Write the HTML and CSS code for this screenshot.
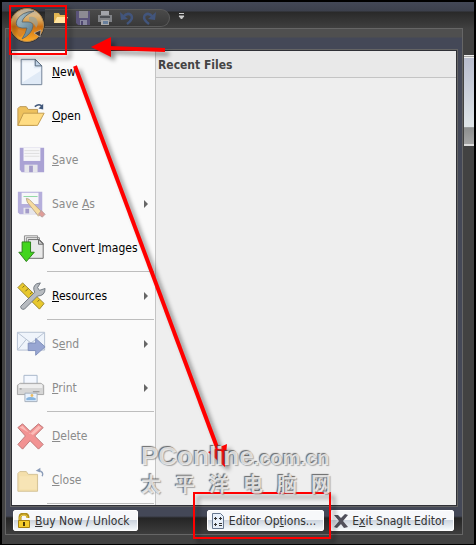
FILE: index.html
```
<!DOCTYPE html>
<html lang="en">
<head>
  <meta charset="UTF-8">
  <title>SnagIt Editor</title>
  <link rel="stylesheet" href="styles.css">
</head>
<body>

<div class="window">

  <!-- title bar -->
  <header class="titlebar">
    <button class="orb" aria-label="SnagIt menu">
      <svg width="36" height="36" viewBox="0 0 36 36">
        <defs>
          <linearGradient id="orb" x1="0" y1="0" x2="0" y2="1">
            <stop offset="0" stop-color="#d9d2c4"/>
            <stop offset=".35" stop-color="#dba75a"/>
            <stop offset=".55" stop-color="#c96f14"/>
            <stop offset="1" stop-color="#ffac28"/>
          </linearGradient>
          <linearGradient id="swirl" x1="0" y1="0" x2="1" y2="1">
            <stop offset="0" stop-color="#b9c9cb"/>
            <stop offset=".5" stop-color="#7f9eac"/>
            <stop offset="1" stop-color="#577685"/>
          </linearGradient>
        </defs>
        <circle cx="18" cy="18" r="17.500" fill="#2b2927"/>
        <circle cx="18" cy="18" r="16.500" fill="url(#orb)" stroke="#b98a4a"/>
        <path d="M25 4Q12 5 8 13q-3 7 5 8l5 0q-1 5-5 11 10-5 11-13 0-4-5-4l-6 0q1-6 12-11z" fill="url(#swirl)" stroke="#59656a" stroke-width=".8"/>
        <path d="M20 10q6-1 8 3 2 4-1 8-1-5-7-7z" fill="#96a19b" opacity=".7"/>
        <path d="M9 22q5 2 6 2-2 5-4 6-4-3-2-8z" fill="#d8852a"/>
        <path d="M25 26l7-3-1 7z" fill="#3b3634" stroke="#ddd" stroke-width=".5"/>
      </svg>
    </button>
    <div class="quick">
      <button aria-label="Open"><svg width="16" height="14" viewBox="0 0 16 14"><path d="M1 2h5l1 2h5v8H1z" fill="#e6b955"/><path d="M4 6h11l-3 6H1z" fill="#ffe4a0"/><path d="M11 3q2-3 4 0" stroke="#444d60" fill="none"/></svg></button>
      <button aria-label="Save"><svg width="16" height="14" viewBox="0 0 16 14"><path d="M1 0h14v14H3l-2-2z" fill="#5a5379"/><path d="M4 0h9v7H4z" fill="#8d8b93"/><path d="M5 9h7v5H5z" fill="#8988a0"/><path d="M6 10h2v4H6z" fill="#4f4870"/></svg></button>
      <button aria-label="Print"><svg width="16" height="14" viewBox="0 0 16 14"><path d="M4 0h8v5H4z" fill="#a2a4aa"/><path d="M1 4h14v7H1z" fill="#808286"/><path d="M3 5h10v2H3z" fill="#4b4e54"/><path d="M4 9h8v5H4z" fill="#aaa"/><path d="M6 10h5v3H6z" fill="#69809c"/></svg></button>
      <button aria-label="Undo"><svg width="16" height="14" viewBox="0 0 16 14"><path d="M4 6q4-5 8-2 3 4-4 9" fill="none" stroke="#42557c" stroke-width="2.500"/><path d="M1 1l1 8 7-1z" fill="#42557c"/></svg></button>
      <button aria-label="Redo"><svg width="16" height="14" viewBox="0 0 16 14"><path d="M12 6Q8 1 4 4q-3 4 4 9" fill="none" stroke="#42557c" stroke-width="2.500"/><path d="M15 1l-1 8-7-1z" fill="#42557c"/></svg></button>
    </div>
    <button class="more" aria-label="Customize"><svg width="7" height="7" viewBox="0 0 7 7"><path d="M1 .5h5M1 3h5L3.500 6z" fill="#ccc" stroke="#ccc"/></svg></button>
  </header>

  <div class="ribbon"></div>

  <!-- application menu -->
  <main class="menu">
    <div class="panes">
      <ul class="commands">
        <li><button><svg class="icon" viewBox="0 0 32 32"><path d="M5.500 2.500h15l7 7v20h-22z" fill="#e0eaf6" stroke="#6f7f93"/><path d="M7 4h12v8h7v3L7 27z" fill="#f4f8fd"/><path d="M20.500 2.500v7h7z" fill="#c3d5e8" stroke="#536477"/></svg><span><u>N</u>ew</span></button></li>
        <li><button><svg class="icon" viewBox="0 0 32 32"><path d="M2 8l2-2h7l2 3h10v5l-4 12H2z" fill="#eec15d" stroke="#b99552"/><path d="M8 13h22l-7 13H2z" fill="#ffdc83" stroke="#c09a4c"/><path d="M20 6q5-4 8 0" fill="none" stroke="#40577a" stroke-width="1.500"/><path d="M29 3v6l-5-1z" fill="#40577a"/></svg><span><u>O</u>pen</span></button></li>
        <li><button disabled><svg class="icon" viewBox="0 0 32 32"><path d="M4 3h26v26H6l-2-3z" fill="#aaa2d4"/><path d="M8 3h18v14H8z" fill="#f6f6f8"/><path d="M9 6h16M9 9h16M9 12h16" stroke="#ddd"/><path d="M9 21h14v8H9z" fill="#e6e6eb"/><path d="M14 22h4v7h-4z" fill="#a39bc9"/></svg><span><u>S</u>ave</span></button></li>
        <li><button disabled><svg class="icon" viewBox="0 0 32 32"><path d="M2 3h26v24H4l-2-2z" fill="#b5aedb"/><path d="M6 4h18v12H6z" fill="#f7f7f9"/><path d="M8 8h15" stroke="#8dd6a2"/><path d="M8 20h13v7H8z" fill="#e6e6eb"/><path d="M10 21h4v5h-4z" fill="#a39bc9"/><path d="M11 10l3 1 14 14-4 4-12-15z" fill="#f7dc9f" stroke="#baa68a"/><path d="M24 27l3-4 4 4-3 3z" fill="#df9d98" stroke="#b7a0a0"/></svg><span>Save <u>A</u>s</span><i></i></button></li>
        <li><button><svg class="icon" viewBox="0 0 32 32"><path d="M9 3h14v18H9zM11 5h14v18H11z" fill="#f2f2f2" stroke="#888"/><path d="M13 7h12l4 4v16H13z" fill="#e9e9e9" stroke="#666"/><path d="M24 7v5h5z" fill="#ccc" stroke="#666"/><path d="M6.500 9.500h9v11h4l-8.500 10-8-10h3.500z" fill="#42d51d" stroke="#2b7e19"/></svg><span>Convert <u>I</u>mages</span></button></li>
        <li class="line"></li>
        <li><button><svg class="icon" viewBox="0 0 32 32"><path d="M2 7l5-5 23 22-5 6z" fill="#e8c82d" stroke="#97852f"/><path d="M9 5l-2 2M13 8l-3 3M17 12l-2 2M21 16l-3 3M25 20l-2 2" stroke="#75651d"/><path d="M5 27l15-15q-3-6 2-9l4-1-3 5 2 3 6-2q0 8-8 8L9 30q-4 1-4-3z" fill="#b7bbc0" stroke="#6e757e"/></svg><span><u>R</u>esources</span><i></i></button></li>
        <li class="line"></li>
        <li><button disabled><svg class="icon" viewBox="0 0 32 32"><path d="M1.500 3.500h29v19h-29z" fill="#eff4fb" stroke="#b3bfd0"/><path d="M2 4l14 11L30 4M2 22l9-11M30 22l-9-11" fill="none" stroke="#b3bfd0"/><path d="M13 15h8v-5l10 9-10 9v-5h-8z" fill="#98a6d2" stroke="#7f8fba"/></svg><span>S<u>e</u>nd</span><i></i></button></li>
        <li><button disabled><svg class="icon" viewBox="0 0 32 32"><path d="M8.500 2.500h14v10h-14z" fill="#f4f8ff" stroke="#a5b4c9"/><path d="M1.500 13l3-2h22l3 2v10h-28z" fill="#d6d6d6" stroke="#a4a4a4"/><path d="M3 12h25v4H3z" fill="#eee"/><path d="M4 17h2M18 20h7" stroke="#888"/><path d="M9.500 21.500h13v9h-13z" fill="#e9f2fd" stroke="#a2adba"/><path d="M11 27q4-3 10 0v2H11z" fill="#87b4de"/><circle cx="17" cy="24" r="1.500" fill="#edbd62"/></svg><span><u>P</u>rint</span><i></i></button></li>
        <li class="line"></li>
        <li><button disabled><svg class="icon" viewBox="0 0 32 32"><path d="M2 7l5-4 8 8 9-8 5 4-9 9 9 9-5 5-9-9-8 9-5-5 8-9z" fill="#f29393" stroke="#b77"/><path d="M4 7l3-2 8 9 9-9 3 2-9 8z" fill="#fbbdb9"/></svg><span><u>D</u>elete</span></button></li>
        <li><button disabled><svg class="icon" viewBox="0 0 32 32"><path d="M2 9l2-2h7l2 3h10v18H2z" fill="#f4dfab" stroke="#d2c093"/><path d="M4 12h18v14H4z" fill="#f7e4b5"/><path d="M28 12q2-5-4-6" fill="none" stroke="#8b9cb8" stroke-width="1.500"/><path d="M21 6l5-3v5z" fill="#8b9cb8"/></svg><span><u>C</u>lose</span></button></li>
        <li class="line last"></li>
      </ul>
      <section class="recent">
        <h2>Recent Files</h2>
      </section>
    </div>

    <footer class="actions">
      <button class="buy"><svg width="16" height="16" viewBox="0 0 16 16"><path d="M4 8V4q0-3 4-3t4 4" fill="none" stroke="#b08f1c" stroke-width="3"/><path d="M4 8V4q0-2 4-2t3 3" fill="none" stroke="#f1cf48"/><path d="M2.500 7.500h11v7h-11z" fill="#f5cd2c" stroke="#a58012"/><path d="M8 9v4" stroke="#4b3b0a" stroke-width="2"/></svg><span><u>B</u>uy Now / Unlock</span></button>
      <button><svg width="16" height="16" viewBox="0 0 16 16"><path d="M2.500 .5h8l3 3v12h-11z" fill="#e8f0fa" stroke="#65768e"/><path d="M4 5.500h3M5.500 4v3M9 5.500h3M4 11.500h3M5.500 10v3M9 10.500h3M9 12.500h3M10.500 4v3" stroke="#333"/></svg><span>Editor Op<u>t</u>ions...</span></button>
      <button><svg width="16" height="16" viewBox="0 0 16 16"><path d="M1 2h4l3 3 4-4 3 1-5 6 5 6-4 1-3-4-4 4-3-1 5-6z" fill="#51505b"/></svg><span>E<u>x</u>it SnagIt Editor</span></button>
    </footer>
  </main>
</div>

<!-- red marks -->
<svg class="arrows" width="476" height="545" viewBox="0 0 476 545">
  <g fill="red" stroke="red">
    <path d="M165 50L108 48" stroke-width="4"/>
    <path d="M91 47l20-10v20z" stroke="none"/>
    <path d="M75 66L218 450" stroke-width="4"/>
    <path d="M225 467l-17-15 19-8z" stroke="none"/>
  </g>
  <g fill="none" stroke="red" stroke-width="2">
    <path d="M10 6h56v48H10z"/>
    <path d="M194 493h136v45H194z"/>
  </g>
</svg>

<!-- watermark -->
<div class="mark">
  <p class="name">PConline<small>.com.cn</small></p>
  <p class="cn" lang="zh-CN"><span>太</span><span>平</span><span>洋</span><span>电</span><span>脑</span><span>网</span></p>
</div>

</body>
</html>
```
FILE: styles.css
```
* {
  box-sizing: border-box;
  margin: 0;
  padding: 0;
  list-style: none;
}

body {
  position: relative;
  background: #000;
  font: 12px/16px "DejaVu Sans Condensed", "DejaVu Sans", sans-serif;
}

button {
  border: 0;
  background: none;
  font: inherit;
  color: inherit;
}

svg {
  display: block;
  flex: none;
}

.window {
  display: flex;
  flex-direction: column;
  position: relative;
  min-height: 100vh;
  border: 2px solid #000;
  padding: 0 11px 9px 3px;
  background: linear-gradient(#434857 0, #3c404c 9px, #292929 10px, #414141 27px, #424242 28px);
}

/* title bar */
.titlebar {
  display: flex;
  height: 26px;
  padding: 7px 0 0 40px;
}

.orb {
  position: absolute;
  left: 7px;
  top: 5px;
  z-index: 2;
}

.quick {
  display: flex;
  align-items: center;
  gap: 6px;
  height: 18px;
  padding: 0 12px 0 8px;
  border: 1px solid #5a5a5a;
  border-left: 0;
  border-radius: 0 9px 9px 0;
  background: linear-gradient(#4a4a4a, #393939);
}

.more {
  display: flex;
  padding: 4px 0 0 8px;
}

/* piece of the ribbon behind the menu */
.ribbon {
  position: absolute;
  top: 53px;
  right: 0;
  width: 10px;
  height: 91px;
  border-top: 3px double #eee;
  border-bottom: 2px solid #ddd;
  background: linear-gradient(#b8bdce, #dfe5e8 80%, #8c8e8e 81%, #a5a5a5);
}

/* application menu */
.menu {
  flex: 1;
  display: flex;
  flex-direction: column;
  position: relative;
  padding: 0 5px;
  border: 1px solid #666;
  background: linear-gradient(#4f4f4f 8px, #444857 9px, #444857 calc(100% - 18px), #252525 calc(100% - 16px), #3d3d3d);
}

.panes {
  flex: 1;
  display: flex;
  margin-top: 21px;
  border: 1px solid #2f3036;
  outline: 1px solid #646464;
  background: #eee;
}

.commands {
  width: 144px;
  border-right: 1px solid #c4c4c4;
  background: #fafafa;
}

.commands button {
  display: flex;
  align-items: center;
  gap: 6px;
  width: 100%;
  height: 44px;
  padding: 0 7px 2px 4px;
  text-align: left;
}

.commands button:disabled {
  color: #8b8b8b;
}

.commands .icon {
  width: 30px;
  height: 30px;
}

.commands span {
  white-space: nowrap;
}

.commands i {
  margin-left: auto;
  border: 4px solid transparent;
  border-left-color: #666;
  border-right: 0;
}

.commands .line {
  height: 4px;
  margin: 0 1px 0 35px;
  border-top: 1px solid #bdbdbd;
}

.commands .last {
  height: 2px;
}

.recent {
  flex: 1;
}

.recent h2 {
  height: 27px;
  padding: 6px 2px 4px;
  border-bottom: 1px solid #c4c4c4;
  background: #e9e9e9;
  font-size: 12px;
  line-height: 16px;
  color: #444;
}

.actions {
  display: flex;
  gap: 6px;
  height: 28px;
  padding: 4px 3px 3px 2px;
}

.actions button {
  display: flex;
  align-items: center;
  gap: 3px;
  height: 21px;
  padding: 0 7px 0 2px;
  border: 1px solid #fff;
  border-radius: 2px;
  background: linear-gradient(#f7f8fa 45%, #cdd5df 50%, #f6fafc);
  color: #333;
  white-space: nowrap;
}

.actions .buy {
  margin-right: auto;
}

/* watermark */
.mark {
  position: absolute;
  left: 141px;
  top: 443px;
  z-index: 4;
  width: 190px;
  color: rgba(250, 250, 250, .8);
  text-shadow: -1px -1px 1px rgba(70, 70, 70, .8), 1px 1px 1px rgba(120, 120, 120, .6);
  pointer-events: none;
}

.name {
  font: bold 26px/26px "Liberation Sans", sans-serif;
}

.name small {
  font-size: 20px;
}

.cn {
  display: flex;
  justify-content: space-between;
  font: bold 20px/26px "Noto Sans CJK SC", sans-serif;
}

/* red marks */
.arrows {
  position: absolute;
  left: 0;
  top: 0;
  z-index: 3;
  filter: drop-shadow(4px 4px 2px rgba(0, 0, 0, .4));
  pointer-events: none;
}
```
